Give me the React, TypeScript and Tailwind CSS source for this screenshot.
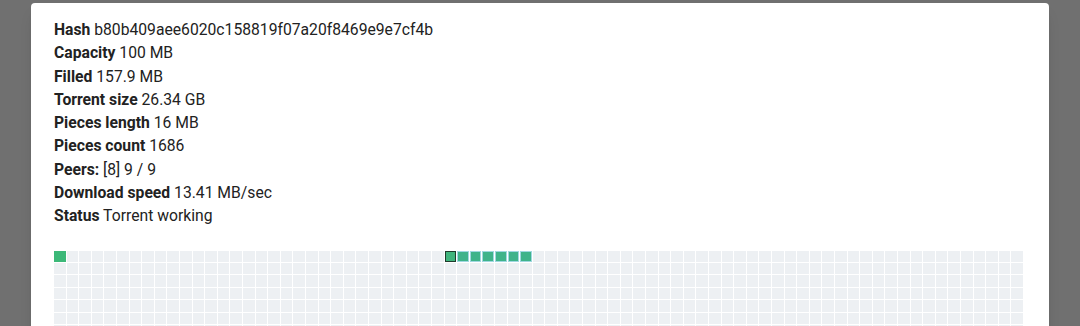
import React from 'react';

const info: [string, string][] = [
    ['Hash', 'b80b409aee6020c158819f07a20f8469e9e7cf4b'],
    ['Capacity', '100 MB'],
    ['Filled', '157.9 MB'],
    ['Torrent size', '26.34 GB'],
    ['Pieces length', '16 MB'],
    ['Pieces count', '1686'],
    ['Peers:', '[8] 9 / 9'],
    ['Download speed', '13.41 MB/sec'],
    ['Status', 'Torrent working'],
];

const COLS = 77;
const ROWS = 8;

const App: React.FC = () => {
    const cells = Array.from({ length: COLS * ROWS }, (_, i) => i);

    return (
        <div className="h-[326px] overflow-hidden bg-[#707070] px-[31px] pt-[3px] font-['Roboto',sans-serif]">
            <div className="bg-white rounded-t-[4px] px-[23px] pt-[15px] pb-6 shadow-lg">
                {/* Torrent info */}
                <div className="text-[15.7px] leading-[23.3px] text-[#222]">
                    {info.map(([label, value]) => (
                        <div key={label}>
                            <span className="font-bold">{label}</span> {value}
                        </div>
                    ))}
                </div>

                {/* Pieces cache map */}
                <div className="mt-[23px] w-[969px] grid grid-cols-[repeat(77,minmax(0,1fr))] gap-[1px]">
                    {cells.map(i => {
                        const active = i === 31;
                        const loaded = i === 0 || (i > 31 && i <= 37);
                        let cls = 'bg-[#edf0f3]';
                        if (active) cls = 'bg-[#3fb47c] border border-[#1f3b2c]';
                        else if (i === 0) cls = 'bg-[#3cb878]';
                        else if (loaded) cls = 'bg-[#3fb38a] border border-[#9fd7e0]';
                        return <div key={i} className={`h-[11.4px] ${cls}`} />;
                    })}
                </div>
            </div>
        </div>
    );
};

export default App;
